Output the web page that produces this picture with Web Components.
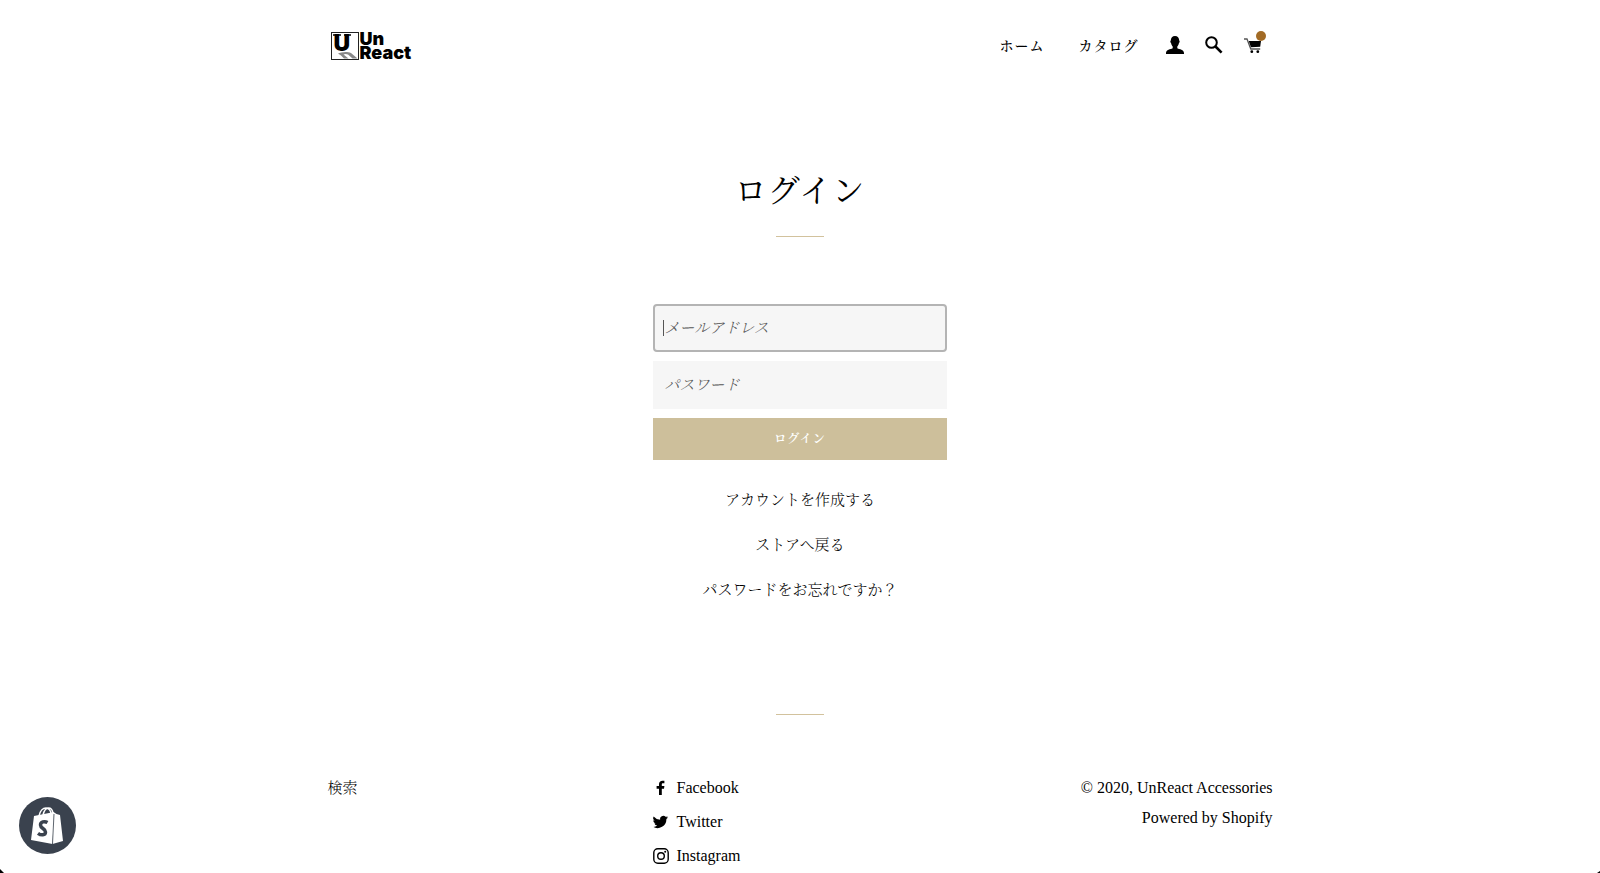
<!DOCTYPE html>
<html lang="ja">
<head>
<meta charset="utf-8">
<meta name="viewport" content="width=device-width, initial-scale=1">
<title>ログイン – UnReact Accessories</title>
<style>
  body {
    margin: 0;
    background: #fff;
    color: #000;
    font-family: "Liberation Serif", "Noto Serif CJK JP", "Noto Sans CJK JP", serif;
    font-size: 15px;
    font-weight: 300;
    line-height: 30px;
  }
</style>
</head>
<body>
<store-page>
  <store-header slot="header">
    <store-logo slot="logo"></store-logo>
    <nav-link href="#home">ホーム</nav-link>
    <nav-link href="#catalog">カタログ</nav-link>
    <icon-link slot="icons" name="account" label="アカウント"></icon-link>
    <icon-link slot="icons" name="search" label="検索"></icon-link>
    <icon-link slot="icons" name="cart" label="カート" badge></icon-link>
  </store-header>
  <login-form></login-form>
  <store-footer slot="footer"></store-footer>
</store-page>
<shopify-badge></shopify-badge>
<window-corners></window-corners>

<script>
const ICONS = {
  account: /* html */`<svg width="20" height="20" viewBox="0 0 20 20"><path d="M10 1C7.400 1 5.800 3 5.800 5.600c-.8.200-.5 2 .3 2.600.4 1.700 1 2.700 1.600 3.300v1.700C5.500 14.300 1 14.600 1 18v1h18v-1c0-3.400-4.500-3.700-6.700-4.800v-1.700c.6-.6 1.200-1.600 1.600-3.300.8-.6 1.100-2.400.3-2.600C14.200 3 12.600 1 10 1z"/></svg>`,
  search: /* html */`<svg width="20" height="20" viewBox="0 0 20 20"><g fill="none" stroke="#000"><circle cx="7.500" cy="7.500" r="5.300" stroke-width="2"/><path d="M11.500 11.500L17.600 17.600" stroke-width="2.600"/></g></svg>`,
  cart: /* html */`<svg width="20" height="20" viewBox="0 0 20 20"><path d="M1 4h3l3.800 10h9.400" fill="none" stroke="#555" stroke-width="1.300"/><path d="M5.800 6H18l-.8 5.700-9.300.6z"/><circle cx="8.800" cy="16.700" r="1.400"/><circle cx="14.800" cy="16.700" r="1.400"/></svg>`,
  facebook: /* html */`<svg width="16" height="16" viewBox="0 0 16 16"><path d="M6 15V8.700H3.600V6.100H6V4.200C6 2 7.500.7 9.400.7c1 0 1.700.1 2 .1v2.500h-1.300c-1.100 0-1.300.5-1.300 1.300v1.500h2.600l-.4 2.600H8.800V15z"/></svg>`,
  twitter: /* html */`<svg width="16" height="16" viewBox="0 0 24 24"><path d="M22.600 5a9.500 9.500 0 0 1-2.700.8 4.700 4.700 0 0 0 2-2.600 9.300 9.300 0 0 1-3 1.100 4.700 4.700 0 0 0-8.100 4.300A13.400 13.400 0 0 1 1 3.700a4.700 4.700 0 0 0 1.500 6.300 4.600 4.600 0 0 1-2.200-.6c0 2.300 1.600 4.200 3.800 4.700a4.700 4.700 0 0 1-2.100.1 4.700 4.700 0 0 0 4.400 3.200A9.500 9.500 0 0 1 0 19.300a13.400 13.400 0 0 0 20.100-11.900A9.600 9.600 0 0 0 22.600 5z"/></svg>`,
  instagram: /* html */`<svg width="16" height="16" viewBox="0 0 16 16"><g fill="none" stroke="#000" stroke-width="1.400"><rect x=".8" y=".8" width="14.400" height="14.400" rx="4"/><circle cx="8" cy="8" r="3.300"/></g><circle cx="12.200" cy="3.800" r="1"/></svg>`
};

class StorePage extends HTMLElement {
  constructor() {
    super();
    this.attachShadow({ mode: "open" }).innerHTML = /* html */`
    <style>
      :host { display: block; }

      .wrapper {
        max-width: 945px;
        margin: 0 auto;
        padding: 0 30px;
      }

      main { padding: 64px 0 94px; }
    </style>
    <div class="wrapper">
      <slot name="header"></slot>
      <main><slot></slot></main>
      <slot name="footer"></slot>
    </div>`;
  }
}

class StoreHeader extends HTMLElement {
  constructor() {
    super();
    this.attachShadow({ mode: "open" }).innerHTML = /* html */`
    <style>
      :host { display: block; }

      header,
      nav,
      .icons {
        display: flex;
        align-items: center;
      }

      header {
        justify-content: space-between;
        height: 92px;
      }

      nav { gap: 34px; }

      .icons {
        gap: 19px;
        margin-left: -8px;
        padding: 0 10px 2px 0;
      }
    </style>
    <header>
      <slot name="logo"></slot>
      <nav>
        <slot></slot>
        <div class="icons"><slot name="icons"></slot></div>
      </nav>
    </header>`;
  }
}

class StoreLogo extends HTMLElement {
  constructor() {
    super();
    this.attachShadow({ mode: "open" }).innerHTML = /* html */`
    <style>
      :host { display: block; }

      a {
        display: flex;
        gap: 1px;
        padding-left: 3px;
        color: #000;
        font: 900 18px/14px Inter, sans-serif;
        text-decoration: none;
      }

      .mark {
        position: relative;
        box-sizing: border-box;
        width: 28px;
        height: 28px;
        border: 1px solid #222;
      }

      .mark span {
        position: absolute;
        left: 2px;
        top: 1px;
        font-size: 23px;
        line-height: 18px;
      }

      .mark svg {
        position: absolute;
        left: 0;
        top: 0;
      }

      .name span { display: block; }
    </style>
    <a href="#home">
      <span class="mark">
        <svg width="26" height="26" viewBox="0 0 26 26">
          <path d="M6 20.500c3-1.500 9-2.500 13-.5l6.500 5.500h-5l-4.500-4c-2-1-3.500-.5-4.500 0l5 4H12l-3-3z" fill="#888"/>
          <path d="M1 2h8M12 2h7" stroke="#000" stroke-width="1.500"/>
        </svg>
        <span>U</span>
      </span>
      <span class="name"><span>Un</span><span>React</span></span>
    </a>`;
  }
}

class NavLink extends HTMLElement {
  connectedCallback() {
    this.attachShadow({ mode: "open" }).innerHTML = /* html */`
    <style>
      :host { display: block; }

      a {
        color: #000;
        font-size: 14px;
        font-weight: 500;
        letter-spacing: 1px;
        text-decoration: none;
      }
    </style>
    <a href="${this.getAttribute("href")}"><slot></slot></a>`;
  }
}

class IconLink extends HTMLElement {
  connectedCallback() {
    this.attachShadow({ mode: "open" }).innerHTML = /* html */`
    <style>
      :host { display: block; }

      a {
        display: block;
        position: relative;
      }

      svg { display: block; }

      .badge {
        position: absolute;
        top: -4px;
        right: -3px;
        width: 10px;
        height: 10px;
        border-radius: 50%;
        background: #a26b25;
      }
    </style>
    <a href="#${this.getAttribute("name")}" aria-label="${this.getAttribute("label")}">
      ${ICONS[this.getAttribute("name")]}
      ${this.hasAttribute("badge") ? `<span class="badge"></span>` : ""}
    </a>`;
  }
}

class ShortRule extends HTMLElement {
  constructor() {
    super();
    this.attachShadow({ mode: "open" }).innerHTML = /* html */`
    <style>
      :host { display: block; }

      hr {
        width: 48px;
        margin: 0 auto;
        border: 0;
        border-top: 1px solid #d2c29d;
      }
    </style>
    <hr>`;
  }
}

class TextField extends HTMLElement {
  connectedCallback() {
    const label = this.getAttribute("label");
    this.attachShadow({ mode: "open" }).innerHTML = /* html */`
    <style>
      :host { display: block; }

      input {
        display: block;
        box-sizing: border-box;
        width: 100%;
        height: 48px;
        padding: 0 10px;
        border: 2px solid #f6f6f6;
        border-radius: 0;
        outline: 0;
        background: #f6f6f6;
        font: inherit;
      }

      input::placeholder {
        color: #555;
        font-style: italic;
        opacity: 1;
      }

      /* Selected field, with its text cursor */

      :host([current]) input {
        border-color: #b4b4b4;
        border-radius: 4px;
        background: linear-gradient(#555, #555) 8px center / 1px 16px no-repeat #f6f6f6;
      }
    </style>
    <input type="${this.getAttribute("type")}" placeholder="${label}" aria-label="${label}">`;
  }
}

class LoginForm extends HTMLElement {
  constructor() {
    super();
    this.attachShadow({ mode: "open" }).innerHTML = /* html */`
    <style>
      :host {
        display: block;
        text-align: center;
      }

      h1 {
        margin: 0 0 10px;
        font-size: 32px;
        font-weight: 400;
        line-height: 70px;
        letter-spacing: 1px;
      }

      form {
        display: grid;
        gap: 9px;
        width: calc((100% - 60px) / 3);
        min-width: 280px;
        margin: 67px auto 25px;
      }

      button {
        height: 42px;
        padding: 0;
        border: 0;
        background: #cdbf9b;
        color: #fff;
        font: inherit;
        font-size: 12px;
        font-weight: 600;
        letter-spacing: 1px;
      }

      p { margin: 0 0 15px; }

      p a {
        color: inherit;
        text-decoration: none;
      }
    </style>
    <h1>ログイン</h1>
    <short-rule></short-rule>
    <form>
      <text-field type="email" label="メールアドレス" current></text-field>
      <text-field type="password" label="パスワード"></text-field>
      <button type="button">ログイン</button>
    </form>
    <p><a href="#register">アカウントを作成する</a></p>
    <p><a href="#store">ストアへ戻る</a></p>
    <p><a href="#recover">パスワードをお忘れですか？</a></p>`;
  }
}

class StoreFooter extends HTMLElement {
  constructor() {
    super();
    this.attachShadow({ mode: "open" }).innerHTML = /* html */`
    <style>
      :host { display: block; }

      .columns {
        display: grid;
        grid-template-columns: repeat(3, 1fr);
        gap: 30px;
        padding-top: 58px;
      }

      ul {
        display: grid;
        align-content: start;
        gap: 4px;
        margin: 0;
        padding: 0;
        list-style: none;
      }

      a {
        color: inherit;
        text-decoration: none;
      }

      .social,
      .legal {
        font-size: 16px;
      }

      .social a {
        display: flex;
        align-items: center;
        gap: 8px;
      }

      .legal { text-align: right; }
      .legal p { margin: 0; }
    </style>
    <footer>
      <short-rule></short-rule>
      <div class="columns">
        <ul><li><a href="#search">検索</a></li></ul>
        <ul class="social">
          <li><a href="#facebook">${ICONS.facebook}Facebook</a></li>
          <li><a href="#twitter">${ICONS.twitter}Twitter</a></li>
          <li><a href="#instagram">${ICONS.instagram}Instagram</a></li>
        </ul>
        <div class="legal">
          <p>© 2020, <a href="#home">UnReact Accessories</a></p>
          <p><a href="#shopify">Powered by Shopify</a></p>
        </div>
      </div>
    </footer>`;
  }
}

class ShopifyBadge extends HTMLElement {
  constructor() {
    super();
    this.attachShadow({ mode: "open" }).innerHTML = /* html */`
    <style>
      :host {
        position: fixed;
        left: 19px;
        bottom: 19px;
      }

      button {
        display: block;
        padding: 0;
        border: 0;
        border-radius: 50%;
        background: #3a424e;
      }

      svg { display: block; }
    </style>
    <button type="button" aria-label="Shopify">
      <svg width="57" height="57" viewBox="0 0 57 57">
        <path d="M15 19l20-4-1.500 32L12 43z" fill="#fff"/>
        <path d="M34.500 15l3 2 3.500 1 3 26-10.500 3z" fill="#fff"/>
        <path d="M35 17l-1.500 30" stroke="#3a424e" stroke-width=".8"/>
        <path d="M20 19c1-5 4-8 7-8 3 0 5 3 5 6M24 18c1-4 3-7 5.500-7 2.500 0 4 2 4.500 5" fill="none" stroke="#fff" stroke-width="1.500"/>
        <path d="M28.500 25.500c-3-1.700-7-.7-7 2.500 0 3.500 5 3.500 5 7 0 3.500-4.500 3.500-7.500 1.300" fill="none" stroke="#3a424e" stroke-width="3.500"/>
      </svg>
    </button>`;
  }
}

class WindowCorners extends HTMLElement {
  constructor() {
    super();
    this.attachShadow({ mode: "open" }).innerHTML = /* html */`
    <style>
      :host {
        position: fixed;
        bottom: 0;
        left: 0;
        right: 0;
        display: flex;
        justify-content: space-between;
        align-items: flex-end;
        pointer-events: none;
      }

      i {
        width: 4px;
        height: 4px;
        background: #000;
        clip-path: polygon(0 0, 100% 100%, 0 100%);
      }

      i:last-child {
        width: 3px;
        height: 2px;
        clip-path: polygon(100% 0, 100% 100%, 0 100%);
      }
    </style>
    <i></i><i></i>`;
  }
}

customElements.define("store-page", StorePage);
customElements.define("store-header", StoreHeader);
customElements.define("store-logo", StoreLogo);
customElements.define("nav-link", NavLink);
customElements.define("icon-link", IconLink);
customElements.define("short-rule", ShortRule);
customElements.define("text-field", TextField);
customElements.define("login-form", LoginForm);
customElements.define("store-footer", StoreFooter);
customElements.define("shopify-badge", ShopifyBadge);
customElements.define("window-corners", WindowCorners);
</script>
</body>
</html>
